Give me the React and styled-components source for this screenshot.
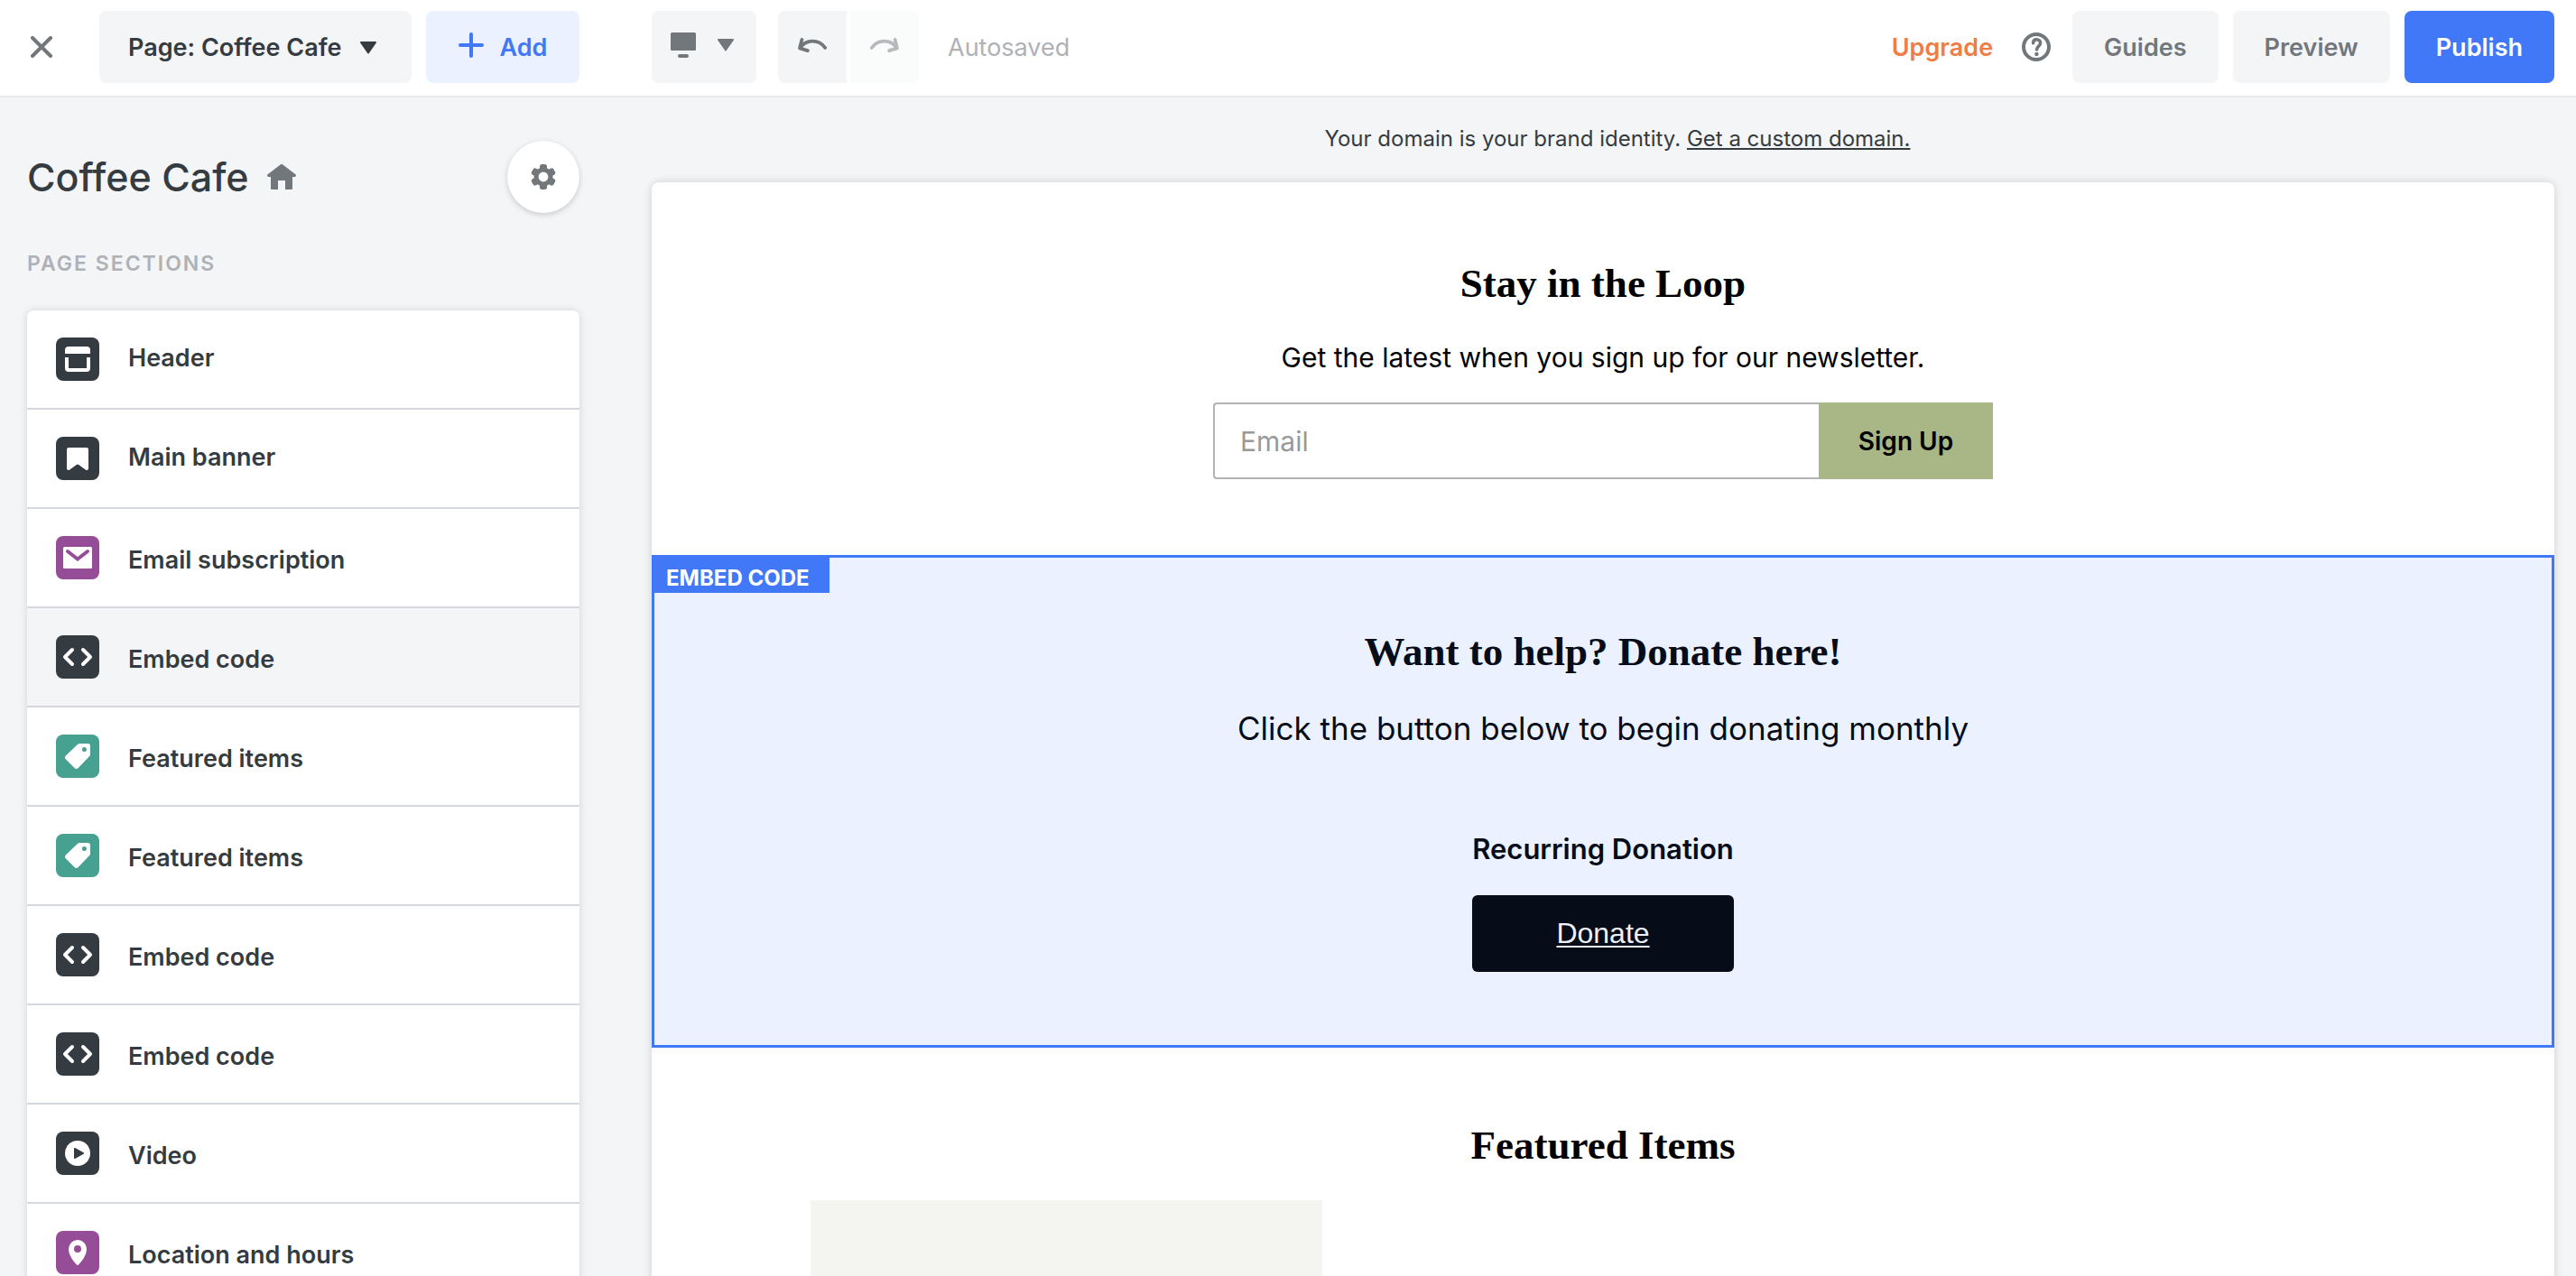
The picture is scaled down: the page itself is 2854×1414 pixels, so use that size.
import * as React from 'react';
import { useState } from 'react';
import styled, { createGlobalStyle } from 'styled-components';

const sans = '"Inter", "Liberation Sans", sans-serif';
const serif = '"Liberation Serif", "Times New Roman", serif';

const SECTIONS = [
  { id: 1, icon: 'header', label: 'Header', pinned: true },
  { id: 2, icon: 'banner', label: 'Main banner', pinned: true },
  { id: 3, icon: 'mail', label: 'Email subscription', color: '#964d97' },
  { id: 4, icon: 'code', label: 'Embed code' },
  { id: 5, icon: 'tag', label: 'Featured items', color: '#47a191' },
  { id: 6, icon: 'tag', label: 'Featured items', color: '#47a191' },
  { id: 7, icon: 'code', label: 'Embed code' },
  { id: 8, icon: 'code', label: 'Embed code' },
  { id: 9, icon: 'video', label: 'Video' },
  { id: 10, icon: 'pin', label: 'Location and hours', color: '#964d97' },
];

export default function App() {
  const [selected, setSelected] = useState(4);

  return (
    <>
      <GlobalStyle />
      <Editor>
        <Toolbar>
          <ToolbarLeft>
            <CloseButton aria-label="Close">
              <CloseIcon />
            </CloseButton>
            <PageSelect>
              <select aria-label="Page" defaultValue="cafe">
                <option value="cafe">Page: Coffee Cafe</option>
              </select>
              <Caret />
            </PageSelect>
            <AddButton>
              <PlusIcon />
              Add
            </AddButton>
          </ToolbarLeft>

          <DeviceButton aria-label="Device preview" aria-haspopup="menu">
            <MonitorIcon />
            <Caret />
          </DeviceButton>
          <History>
            <HistoryButton aria-label="Undo">
              <UndoIcon />
            </HistoryButton>
            <HistoryButton aria-label="Redo" disabled>
              <RedoIcon />
            </HistoryButton>
          </History>
          <Status>Autosaved</Status>

          <ToolbarRight>
            <Upgrade href="#upgrade">Upgrade</Upgrade>
            <HelpButton aria-label="Help">
              <HelpIcon />
            </HelpButton>
            <ToolButton>Guides</ToolButton>
            <ToolButton>Preview</ToolButton>
            <ToolButton $primary>Publish</ToolButton>
          </ToolbarRight>
        </Toolbar>

        <Workspace>
          <Sidebar>
            <SidebarHead>
              <PageTitle>
                Coffee Cafe
                <HomeIcon />
              </PageTitle>
              <SettingsButton aria-label="Page settings">
                <GearIcon />
              </SettingsButton>
            </SidebarHead>
            <SidebarLabel>PAGE SECTIONS</SidebarLabel>
            <SectionList>
              {SECTIONS.map((s) => (
                <li key={s.id}>
                  <SectionRow $active={s.id === selected} onClick={() => setSelected(s.id)}>
                    <SectionIcon name={s.icon} color={s.color || '#343b41'} />
                    <SectionName $pinned={s.pinned}>{s.label}</SectionName>
                  </SectionRow>
                </li>
              ))}
            </SectionList>
          </Sidebar>

          <Stage>
            <DomainNote>
              Your domain is your brand identity. <a href="#domain">Get a custom domain.</a>
            </DomainNote>
            <Site>
              <Newsletter>
                <SiteHeading>Stay in the Loop</SiteHeading>
                <NewsletterText>Get the latest when you sign up for our newsletter.</NewsletterText>
                <SignUpForm onSubmit={(e) => e.preventDefault()}>
                  <EmailInput type="email" placeholder="Email" aria-label="Email" />
                  <SignUpButton type="submit">Sign Up</SignUpButton>
                </SignUpForm>
              </Newsletter>

              <Embed>
                <EmbedTag>EMBED CODE</EmbedTag>
                <SiteHeading>Want to help? Donate here!</SiteHeading>
                <EmbedText>Click the button below to begin donating monthly</EmbedText>
                <DonationTitle>Recurring Donation</DonationTitle>
                <DonateLink href="#donate">Donate</DonateLink>
              </Embed>

              <Featured>
                <SiteHeading>Featured Items</SiteHeading>
                <ItemGrid>
                  <ItemImage />
                </ItemGrid>
              </Featured>
            </Site>
          </Stage>
        </Workspace>
      </Editor>
    </>
  );
}

function CloseIcon() {
  return (
    <svg width="24" height="24" viewBox="0 0 24 24" fill="none" stroke="currentColor" strokeWidth="4" strokeLinecap="round">
      <path d="M2 2l20 20M22 2L2 22" />
    </svg>
  );
}

function PlusIcon() {
  return (
    <svg width="28" height="28" viewBox="0 0 28 28" fill="none" stroke="currentColor" strokeWidth="4" strokeLinecap="round">
      <path d="M14 2v24M2 14h24" />
    </svg>
  );
}

function Caret() {
  return (
    <svg width="18" height="14" viewBox="0 0 18 14" fill="currentColor">
      <path d="M1 0h16a1 1 0 0 1 .8 1.5L9.8 13a1 1 0 0 1-1.6 0L.2 1.5A1 1 0 0 1 1 0z" />
    </svg>
  );
}

function MonitorIcon() {
  return (
    <svg width="28" height="28" viewBox="0 0 28 28" fill="currentColor">
      <rect width="28" height="20" rx="1.5" />
      <rect x="8" y="24" width="12" height="4" rx="2" />
    </svg>
  );
}

function UndoIcon() {
  return (
    <svg width="32" height="16" viewBox="0 0 32 16" fill="none" stroke="currentColor" strokeWidth="3.8" strokeLinecap="round" strokeLinejoin="round">
      <path d="M4.4 2L2 11.4l8.8 2.7M2.6 11C9 1.6 23 1 30.2 11" />
    </svg>
  );
}

function RedoIcon() {
  return (
    <svg width="32" height="16" viewBox="0 0 32 16" fill="none" stroke="currentColor" strokeWidth="3.8" strokeLinecap="round" strokeLinejoin="round">
      <path d="M27.6 2L30 11.4l-8.8 2.7M29.4 11C23 1.6 9 1 1.8 11" />
    </svg>
  );
}

function HelpIcon() {
  return (
    <svg width="32" height="32" viewBox="0 0 32 32" fill="none" stroke="currentColor" strokeLinecap="round">
      <circle cx="16" cy="16" r="14" strokeWidth="4" />
      <path d="M12.6 11.6c.2-2.6 1.8-3.8 3.8-3.8 2.4 0 4.2 1.5 4.2 3.9 0 3.4-4 3.6-4 7.3" strokeWidth="3.6" />
      <circle cx="16.4" cy="24" r="2.2" fill="currentColor" stroke="none" />
    </svg>
  );
}

function HomeIcon() {
  return (
    <svg width="32" height="28" viewBox="0 0 32 28" fill="#72777b">
      <path d="M14.6.6a2 2 0 0 1 2.8 0L31.4 11.2a1.6 1.6 0 0 1-1 2.8H28v13a1 1 0 0 1-1 1h-7V18h-8v10H5a1 1 0 0 1-1-1V14H1.6a1.6 1.6 0 0 1-1-2.8z" />
    </svg>
  );
}

function GearIcon() {
  return (
    <svg width="28" height="28" viewBox="0 0 28 28">
      <g fill="#72777b">
        <circle cx="14" cy="14" r="10.5" />
        <rect x="10" width="8" height="28" rx="2.5" />
        <rect x="10" width="8" height="28" rx="2.5" transform="rotate(60 14 14)" />
        <rect x="10" width="8" height="28" rx="2.5" transform="rotate(120 14 14)" />
      </g>
      <circle cx="14" cy="14" r="5.4" fill="#fff" />
    </svg>
  );
}

const glyphs = {
  header: () => (
    <>
      <path d="M10 18v-4a4 4 0 0 1 4-4h20a4 4 0 0 1 4 4v4z" fill="#fff" />
      <path d="M12 22v12a2 2 0 0 0 2 2h20a2 2 0 0 0 2-2V22" fill="none" stroke="#fff" strokeWidth="4" />
    </>
  ),
  banner: () => (
    <path d="M14 12h20a2 2 0 0 1 2 2v21a2 2 0 0 1-3.6 1.2L25.2 31a1.7 1.7 0 0 0-2.4 0l-7.2 5.2A2 2 0 0 1 12 35V14a2 2 0 0 1 2-2z" fill="#fff" />
  ),
  mail: (color) => (
    <>
      <rect x="8" y="12" width="32" height="24" rx="1.5" fill="#fff" />
      <path d="M13 17l11 8.5L35 17" fill="none" stroke={color} strokeWidth="4" strokeLinecap="round" />
    </>
  ),
  code: () => (
    <path d="M18 16l-8 8 8 8M30 16l8 8-8 8" fill="none" stroke="#fff" strokeWidth="4" strokeLinecap="round" strokeLinejoin="round" />
  ),
  tag: (color) => (
    <>
      <path d="M26 10h9.5a2.5 2.5 0 0 1 2.5 2.5V22a3 3 0 0 1-.9 2.1L24.7 37a3 3 0 0 1-4.2 0L11 27.5a3 3 0 0 1 0-4.2L23.9 10.9A3 3 0 0 1 26 10z" fill="#fff" />
      <circle cx="31.4" cy="16.6" r="2.5" fill={color} />
    </>
  ),
  video: (color) => (
    <>
      <circle cx="24" cy="24" r="14" fill="#fff" />
      <path d="M20 18.8a.8.8 0 0 1 1.2-.7l9.4 5.2a.8.8 0 0 1 0 1.4l-9.4 5.2a.8.8 0 0 1-1.2-.7z" fill={color} />
    </>
  ),
  pin: (color) => (
    <>
      <path d="M24 10a10 10 0 0 1 10 10c0 6.5-5 13.5-9 17.5a1.4 1.4 0 0 1-2 0c-4-4-9-11-9-17.5a10 10 0 0 1 10-10z" fill="#fff" />
      <circle cx="24" cy="20" r="4" fill={color} />
    </>
  ),
};

function SectionIcon({ name, color }) {
  return (
    <svg width="48" height="48" viewBox="0 0 48 48">
      <rect width="48" height="48" rx="8" fill={color} />
      {glyphs[name](color)}
    </svg>
  );
}

const GlobalStyle = createGlobalStyle`
  * {
    box-sizing: border-box;
  }

  body {
    margin: 0;
    background: #f4f5f7;
    color: #343b41;
    font-family: ${sans};
  }

  button, input, select {
    font-family: inherit;
  }

  button {
    border: 0;
    padding: 0;
    cursor: pointer;
  }

  svg {
    flex: none;
    display: block;
  }
`;

const Editor = styled.div`
  height: 100vh;
  display: flex;
  flex-direction: column;
  overflow: hidden;
`;

const Toolbar = styled.header`
  display: flex;
  align-items: center;
  flex: none;
  padding: 12px 24px 14px 30px;
  background: #fff;
  border-bottom: 2px solid #e9eaec;
`;

const ToolbarLeft = styled.div`
  display: flex;
  align-items: center;
  width: 612px;
  margin-right: 80px;
`;

const CloseButton = styled.button`
  display: flex;
  padding: 4px;
  margin-right: 32px;
  background: none;
  color: #72777b;
`;

const PageSelect = styled.div`
  position: relative;
  flex: 1;
  margin: 0 16px;

  select {
    width: 100%;
    height: 80px;
    padding: 0 64px 0 32px;
    appearance: none;
    border: 0;
    border-radius: 8px;
    background: #f4f5f7;
    color: #343b41;
    font-size: 27px;
    font-weight: 600;
  }

  svg {
    position: absolute;
    top: 34px;
    right: 39px;
    pointer-events: none;
  }
`;

const ToolButton = styled.button`
  height: 80px;
  padding: 0 35px;
  border-radius: 8px;
  background: ${props => props.$primary ? '#4178f7' : '#f4f5f7'};
  color: ${props => props.$primary ? '#fff' : '#72777b'};
  font-size: 27px;
  font-weight: 600;
`;

const AddButton = styled(ToolButton)`
  display: flex;
  align-items: center;
  justify-content: center;
  gap: 18px;
  width: 170px;
  background: #ebf1fe;
  color: #4178f7;

  svg {
    margin-bottom: 4px;
  }
`;

const DeviceButton = styled(ToolButton)`
  display: flex;
  align-items: center;
  justify-content: center;
  gap: 24px;
  width: 116px;
  padding: 0 4px 4px 0;
`;

const History = styled.div`
  display: flex;
  gap: 4px;
  margin: 0 32px 0 24px;
  border-radius: 8px;
  overflow: hidden;
`;

const HistoryButton = styled.button`
  display: flex;
  align-items: center;
  justify-content: center;
  width: 76px;
  height: 80px;
  padding-bottom: 4px;
  background: #f4f5f7;
  color: #72777b;

  &:disabled {
    background: #fafcfb;
    color: #b7b9bc;
    cursor: default;
  }
`;

const Status = styled.span`
  color: #aeb1b6;
  font-size: 27px;
`;

const ToolbarRight = styled.div`
  display: flex;
  align-items: center;
  gap: 16px;
  margin-left: auto;
`;

const Upgrade = styled.a`
  color: #ef7d45;
  font-size: 27px;
  font-weight: 600;
  text-decoration: none;
`;

const HelpButton = styled.button`
  display: flex;
  margin: 0 8px 0 16px;
  background: none;
  color: #72777b;
`;

const Workspace = styled.div`
  display: flex;
  flex: 1;
  min-height: 0;
`;

const Sidebar = styled.aside`
  flex: none;
  width: 722px;
  padding: 48px 80px 0 30px;
  overflow: hidden;
`;

const SidebarHead = styled.div`
  display: flex;
  align-items: center;
  justify-content: space-between;
`;

const PageTitle = styled.h1`
  display: flex;
  align-items: center;
  gap: 20px;
  margin: 0;
  font-size: 43px;
  font-weight: 500;
`;

const SettingsButton = styled.button`
  display: flex;
  align-items: center;
  justify-content: center;
  width: 80px;
  height: 80px;
  border-radius: 50%;
  background: #fff;
  box-shadow: 0 2px 6px rgba(0, 0, 0, 0.18);
`;

const SidebarLabel = styled.h2`
  margin: 40px 0 36px;
  color: #aeb1b6;
  font-size: 23px;
  font-weight: 600;
  line-height: 32px;
  letter-spacing: 2px;
`;

const SectionList = styled.ul`
  margin: 0;
  padding: 0;
  list-style: none;
  border-radius: 8px;
  background: #fff;
  box-shadow: 0 0 8px rgba(0, 0, 0, 0.14);
  overflow: hidden;

  li {
    border-bottom: 2px solid #d5d8dc;
  }
`;

const SectionRow = styled.button`
  display: flex;
  align-items: center;
  gap: 32px;
  width: 100%;
  height: 108px;
  padding: 0 32px;
  background: ${props => props.$active ? '#f4f5f7' : '#fff'};
  color: #343b41;
  font-size: 27px;
  font-weight: 600;
`;

const SectionName = styled.span`
  padding: ${props => props.$pinned ? '0 0 4px' : '4px 0 0'};
`;

const Stage = styled.main`
  flex: 1;
  min-width: 0;
  display: flex;
  flex-direction: column;
  padding-right: 24px;
`;

const DomainNote = styled.p`
  margin: 30px -24px 32px 8px;
  font-size: 24px;
  line-height: 32px;
  text-align: center;

  a {
    color: inherit;
    text-decoration-thickness: 2px;
    text-underline-offset: 2px;
  }
`;

const Site = styled.div`
  flex: none;
  border-radius: 8px 8px 0 0;
  background: #fff;
  box-shadow: 0 0 10px rgba(0, 0, 0, 0.16);
  color: #000;
`;

const SiteSection = styled.section`
  display: flex;
  flex-direction: column;
  align-items: center;
`;

const SiteHeading = styled.h2`
  margin: 0;
  font-family: ${serif};
  font-size: 45px;
  font-weight: 700;
  line-height: 56px;
`;

const Newsletter = styled(SiteSection)`
  padding: 84px 0;
`;

const NewsletterText = styled.p`
  margin: 37px 0 33px;
  font-size: 30px;
  line-height: 34px;
`;

const SignUpForm = styled.form`
  display: flex;
  width: 864px;
  height: 85px;
`;

const EmailInput = styled.input`
  flex: 1;
  min-width: 0;
  padding: 0 28px;
  border: 2px solid #b3b3b3;
  border-right: 0;
  border-radius: 4px 0 0 4px;
  background: #fff;
  font-size: 30px;

  &::placeholder {
    color: #999;
  }
`;

const SignUpButton = styled.button`
  width: 193px;
  background: #a9b686;
  color: #000;
  font-size: 28px;
  font-weight: 600;
`;

const Embed = styled(SiteSection)`
  position: relative;
  padding: 76px 0 81px;
  border: 3px solid #4178f7;
  background: #ebf1fe;
  color: #060c18;
`;

const EmbedTag = styled.span`
  position: absolute;
  top: 0;
  left: 0;
  padding: 7px 22px 0 13px;
  background: #4178f7;
  color: #fff;
  font-size: 24px;
  font-weight: 700;
  line-height: 32px;
`;

const EmbedText = styled.p`
  margin: 37px 0 94px;
  font-size: 35px;
  line-height: 40px;
`;

const DonationTitle = styled.h3`
  margin: 0 0 31px;
  font-size: 31px;
  font-weight: 600;
  line-height: 40px;
`;

const DonateLink = styled.a`
  width: 290px;
  border-radius: 6px;
  background: #060c18;
  color: #ebf1fe;
  font-family: "Liberation Sans", Arial, sans-serif;
  font-size: 32px;
  line-height: 85px;
  text-align: center;
  text-decoration-thickness: 2px;
  text-underline-offset: 3px;
`;

const Featured = styled(SiteSection)`
  padding: 80px 176px;
`;

const ItemGrid = styled.div`
  display: grid;
  grid-template-columns: repeat(3, 1fr);
  gap: 28px;
  width: 100%;
  margin-top: 33px;
`;

const ItemImage = styled.div`
  aspect-ratio: 1;
  background: #f4f5f0;
`;
